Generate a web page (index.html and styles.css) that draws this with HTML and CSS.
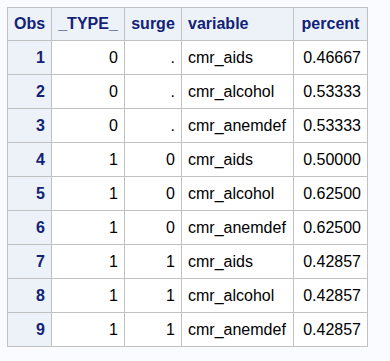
FILE: index.html
```html
<!DOCTYPE html>
<html lang="en">
<head>
    <meta charset="UTF-8">
    <title>Output</title>
    <link rel="stylesheet" href="styles.css">
</head>
<body>
    <table class="proc-table">
        <colgroup>
            <col class="c-obs">
            <col class="c-type">
            <col class="c-surge">
            <col class="c-var">
            <col class="c-pct">
        </colgroup>
        <thead>
            <tr>
                <th>Obs</th>
                <th>_TYPE_</th>
                <th>surge</th>
                <th class="left">variable</th>
                <th>percent</th>
            </tr>
        </thead>
        <tbody>
            <tr><th class="obs">1</th><td>0</td><td>.</td><td class="left">cmr_aids</td><td>0.46667</td></tr>
            <tr><th class="obs">2</th><td>0</td><td>.</td><td class="left">cmr_alcohol</td><td>0.53333</td></tr>
            <tr><th class="obs">3</th><td>0</td><td>.</td><td class="left">cmr_anemdef</td><td>0.53333</td></tr>
            <tr><th class="obs">4</th><td>1</td><td>0</td><td class="left">cmr_aids</td><td>0.50000</td></tr>
            <tr><th class="obs">5</th><td>1</td><td>0</td><td class="left">cmr_alcohol</td><td>0.62500</td></tr>
            <tr><th class="obs">6</th><td>1</td><td>0</td><td class="left">cmr_anemdef</td><td>0.62500</td></tr>
            <tr><th class="obs">7</th><td>1</td><td>1</td><td class="left">cmr_aids</td><td>0.42857</td></tr>
            <tr><th class="obs">8</th><td>1</td><td>1</td><td class="left">cmr_alcohol</td><td>0.42857</td></tr>
            <tr><th class="obs">9</th><td>1</td><td>1</td><td class="left">cmr_anemdef</td><td>0.42857</td></tr>
        </tbody>
    </table>
</body>
</html>
```
FILE: styles.css
```css
body {
    margin: 0;
    padding: 7px;
    background-color: #fafbfe;
    font-family: "Liberation Sans", Arial, sans-serif;
}

.proc-table {
    border-collapse: collapse;
    border: 1px solid #c1c1c1;
    table-layout: fixed;
    width: 360px;
    font-size: 16px;
}

.c-obs { width: 44px; }
.c-type { width: 73px; }
.c-surge { width: 57px; }
.c-var { width: 112px; }
.c-pct { width: 74px; }

th, td {
    border: 1px solid #c1c1c1;
    padding: 0 6px;
    height: 33px;
    text-align: right;
    white-space: nowrap;
}

th {
    background-color: #edf2f9;
    color: #112277;
    font-weight: bold;
}

thead th {
    height: 32px;
    text-align: center;
}

td {
    background-color: #ffffff;
    color: #000000;
}

.left,
thead th.left {
    text-align: left;
}
```
